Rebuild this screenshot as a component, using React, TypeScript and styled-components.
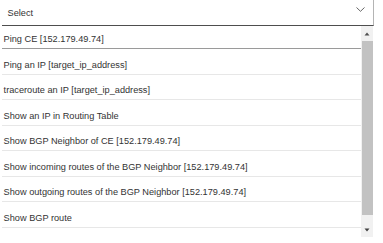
import React from "react";
import styled, { createGlobalStyle } from "styled-components";

const Global = createGlobalStyle`
  html, body { margin: 0; padding: 0; background: #ffffff; }
  body { font-family: "Liberation Sans", Arial, Helvetica, sans-serif; }
`;

const Frame = styled.div`
  width: 383px;
  height: 243px;
  display: flex;
  flex-direction: column;
  padding-left: 2px;
  box-sizing: border-box;
  overflow: hidden;
`;

const Header = styled.div`
  width: 372px;
  height: 26px;
  box-sizing: border-box;
  border-bottom: 1px solid #4e4e4e;
  border-right: 1px solid #b4b4b4;
  display: flex;
  align-items: flex-end;
  justify-content: space-between;
  padding: 0 8px 6px 5.5px;
  flex-shrink: 0;
`;

const Label = styled.span`
  font-size: 9.2px;
  line-height: 11px;
  color: #333333;
`;

const Chevron = styled.svg`
  width: 9px;
  height: 5px;
  align-self: center;
  margin-top: -1px;
  margin-right: 0.5px;
`;

const ListBox = styled.div`
  width: 371px;
  height: 211px;
  display: flex;
  flex-direction: row;
  overflow: hidden;
  flex-shrink: 0;
`;

const Items = styled.div`
  flex: 1;
  display: flex;
  flex-direction: column;
  overflow: hidden;
`;

const Row = styled.div<{ $first?: boolean }>`
  height: ${(p) => (p.$first ? "23px" : "25.5px")};
  flex-shrink: 0;
  box-sizing: border-box;
  display: flex;
  align-items: flex-end;
  padding: 0 0 2.7px 1.6px;
  border-bottom: 1px solid ${(p) => (p.$first ? "#9a9a9a" : "#e7e7e7")};
  font-size: 9.2px;
  line-height: 11px;
  color: #333333;
  white-space: nowrap;
`;

const Scrollbar = styled.div`
  width: 12px;
  display: flex;
  flex-direction: column;
  background: #f1f1f1;
  flex-shrink: 0;
`;

const ScrollButton = styled.div<{ $h: number }>`
  height: ${(p) => p.$h}px;
  display: flex;
  align-items: center;
  justify-content: center;
  flex-shrink: 0;
`;

const Thumb = styled.div`
  height: 174px;
  margin: 0 0.5px;
  background: #c2c2c2;
  flex-shrink: 0;
`;

const Spacer = styled.div`
  flex: 1;
`;

const items = [
  "Ping an IP [target_ip_address]",
  "traceroute an IP [target_ip_address]",
  "Show an IP in Routing Table",
  "Show BGP Neighbor of CE [152.179.49.74]",
  "Show incoming routes of the BGP Neighbor [152.179.49.74]",
  "Show outgoing routes of the BGP Neighbor [152.179.49.74]",
  "Show BGP route",
];

export default function App() {
  return (
    <>
      <Global />
      <Frame>
        <Header>
          <Label>Select</Label>
          <Chevron viewBox="0 0 9 5">
            <path d="M0.5 0.5 L4.5 4.3 L8.5 0.5" fill="none" stroke="#555" strokeWidth="0.9" />
          </Chevron>
        </Header>
        <ListBox>
          <Items>
            <Row $first>Ping CE [152.179.49.74]</Row>
            {items.map((t) => (
              <Row key={t}>{t}</Row>
            ))}
          </Items>
          <Scrollbar>
            <ScrollButton $h={15}>
              <svg width="6" height="4" viewBox="0 0 6 4">
                <path d="M0.5 3.5 L3 0.5 L5.5 3.5 Z" fill="#505050" />
              </svg>
            </ScrollButton>
            <Thumb />
            <Spacer />
            <ScrollButton $h={14}>
              <svg width="6" height="4" viewBox="0 0 6 4">
                <path d="M0.5 0.5 L5.5 0.5 L3 3.5 Z" fill="#404040" />
              </svg>
            </ScrollButton>
          </Scrollbar>
        </ListBox>
      </Frame>
    </>
  );
}
